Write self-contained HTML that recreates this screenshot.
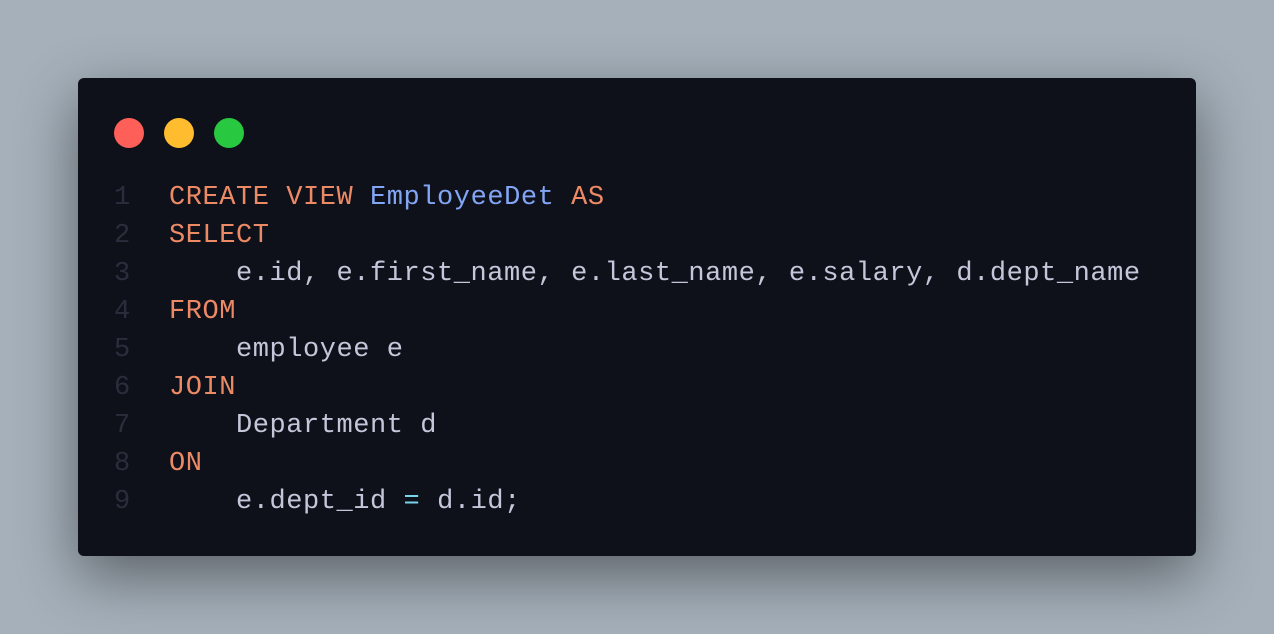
<!DOCTYPE html>
<html><head><style>
html,body{margin:0;padding:0}
body{width:1274px;height:634px;background:#a5b0ba;position:relative;overflow:hidden;font-family:"Liberation Mono",monospace}
.win{position:absolute;left:78px;top:78px;width:1118px;height:478px;background:#0f111a;border-radius:6px;box-shadow:0 20px 60px rgba(0,0,0,0.45)}
.dot{position:absolute;top:40px;width:30px;height:30px;border-radius:50%}
.code{position:absolute;left:0;top:101px;font-size:27px;letter-spacing:0.55px;line-height:38px;color:#c3c7d9}
.row{position:relative;height:38px}
.ln{position:absolute;left:36px;color:#2a2e3c;width:20px}
.l{position:absolute;left:91px;white-space:pre}
.k{color:#ed8a66}.b{color:#82a6f5}.o{color:#79d4f0}
</style></head><body>
<div class="win">
<div class="dot" style="left:36px;background:#fe5f58"></div>
<div class="dot" style="left:86px;background:#febc2e"></div>
<div class="dot" style="left:136px;background:#28c840"></div>
<div class="code"><div class="row"><span class="ln">1</span><span class="l"><span class="k">CREATE VIEW </span><span class="b">EmployeeDet</span><span class="k"> AS</span></span></div><div class="row"><span class="ln">2</span><span class="l k">SELECT</span></div><div class="row"><span class="ln">3</span><span class="l">    e.id, e.first_name, e.last_name, e.salary, d.dept_name</span></div><div class="row"><span class="ln">4</span><span class="l k">FROM</span></div><div class="row"><span class="ln">5</span><span class="l">    employee e</span></div><div class="row"><span class="ln">6</span><span class="l k">JOIN</span></div><div class="row"><span class="ln">7</span><span class="l">    Department d</span></div><div class="row"><span class="ln">8</span><span class="l k">ON</span></div><div class="row"><span class="ln">9</span><span class="l">    e.dept_id <span class="o">=</span> d.id;</span></div></div>
</div>
</body></html>
